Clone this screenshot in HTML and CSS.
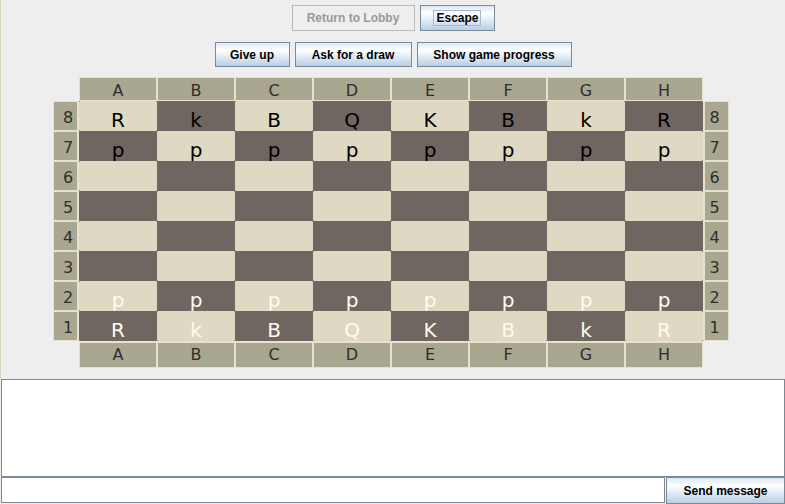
FILE: index.html
```html
<!DOCTYPE html>
<html>
<head>
<meta charset="utf-8">
<link rel="stylesheet" href="styles.css">
</head>
<body>
<div class="top">
  <div class="bar bar1">
    <button class="btn disabled w-lobby" disabled>Return to Lobby</button>
    <button class="btn w-escape"><span class="focus">Escape</span></button>
  </div>
  <div class="bar bar2">
    <button class="btn w-giveup">Give up</button>
    <button class="btn w-draw">Ask for a draw</button>
    <button class="btn w-progress">Show game progress</button>
  </div>
  <div class="board">
    <div class="corner"></div>
    <div class="hd">A</div><div class="hd">B</div><div class="hd">C</div><div class="hd">D</div><div class="hd">E</div><div class="hd">F</div><div class="hd">G</div><div class="hd">H</div>
    <div class="corner"></div>

    <div class="rk rk-l">8</div>
    <div class="sq l b">R</div><div class="sq d b">k</div><div class="sq l b">B</div><div class="sq d b">Q</div><div class="sq l b">K</div><div class="sq d b">B</div><div class="sq l b">k</div><div class="sq d b">R</div>
    <div class="rk rk-r">8</div>

    <div class="rk rk-l">7</div>
    <div class="sq d b">p</div><div class="sq l b">p</div><div class="sq d b">p</div><div class="sq l b">p</div><div class="sq d b">p</div><div class="sq l b">p</div><div class="sq d b">p</div><div class="sq l b">p</div>
    <div class="rk rk-r">7</div>

    <div class="rk rk-l">6</div>
    <div class="sq l"></div><div class="sq d"></div><div class="sq l"></div><div class="sq d"></div><div class="sq l"></div><div class="sq d"></div><div class="sq l"></div><div class="sq d"></div>
    <div class="rk rk-r">6</div>

    <div class="rk rk-l">5</div>
    <div class="sq d"></div><div class="sq l"></div><div class="sq d"></div><div class="sq l"></div><div class="sq d"></div><div class="sq l"></div><div class="sq d"></div><div class="sq l"></div>
    <div class="rk rk-r">5</div>

    <div class="rk rk-l">4</div>
    <div class="sq l"></div><div class="sq d"></div><div class="sq l"></div><div class="sq d"></div><div class="sq l"></div><div class="sq d"></div><div class="sq l"></div><div class="sq d"></div>
    <div class="rk rk-r">4</div>

    <div class="rk rk-l">3</div>
    <div class="sq d"></div><div class="sq l"></div><div class="sq d"></div><div class="sq l"></div><div class="sq d"></div><div class="sq l"></div><div class="sq d"></div><div class="sq l"></div>
    <div class="rk rk-r">3</div>

    <div class="rk rk-l">2</div>
    <div class="sq l w">p</div><div class="sq d w">p</div><div class="sq l w">p</div><div class="sq d w">p</div><div class="sq l w">p</div><div class="sq d w">p</div><div class="sq l w">p</div><div class="sq d w">p</div>
    <div class="rk rk-r">2</div>

    <div class="rk rk-l">1</div>
    <div class="sq d w">R</div><div class="sq l w">k</div><div class="sq d w">B</div><div class="sq l w">Q</div><div class="sq d w">K</div><div class="sq l w">B</div><div class="sq d w">k</div><div class="sq l w">R</div>
    <div class="rk rk-r">1</div>

    <div class="corner"></div>
    <div class="hd hd-b">A</div><div class="hd hd-b">B</div><div class="hd hd-b">C</div><div class="hd hd-b">D</div><div class="hd hd-b">E</div><div class="hd hd-b">F</div><div class="hd hd-b">G</div><div class="hd hd-b">H</div>
    <div class="corner"></div>
  </div>
</div>
<div class="chat"></div>
<div class="sendrow">
  <div class="input"></div>
  <button class="btn send">Send message</button>
</div>
</body>
</html>
```
FILE: styles.css
```css
html, body {
  margin: 0;
  padding: 0;
}
body {
  background: #eeeeee;
  width: 785px;
  height: 504px;
  overflow: hidden;
  font-family: "Liberation Sans", Arial, sans-serif;
}
.top {
  border-left: 1px solid #d9d3c0;
  padding-top: 5px;
  padding-bottom: 11px;
}
.bar {
  display: flex;
  justify-content: center;
  gap: 5px;
}
.bar1 { height: 26px; }
.bar2 { height: 25px; margin-top: 11px; }
.btn {
  box-sizing: border-box;
  height: 100%;
  margin: 0;
  padding: 0;
  border: 1px solid #7a8a99;
  border-radius: 0;
  background: linear-gradient(to bottom, #dde8f3 0%, #ffffff 30%, #e6eef7 55%, #b8cfe5 100%);
  font-family: "Liberation Sans", Arial, sans-serif;
  font-weight: bold;
  font-size: 12px;
  color: #000;
  text-align: center;
  display: flex;
  align-items: center;
  justify-content: center;
}
.btn.disabled {
  background: #eeeeee;
  border-color: #b8b8b8;
  color: #999999;
}
.focus {
  border: 1px solid #a3b8cc;
  padding: 1px 1px 1px 2px;
  line-height: 12px;
}
.w-lobby { width: 123px; }
.w-escape { width: 75px; }
.w-giveup { width: 75px; }
.w-draw { width: 117px; }
.w-progress { width: 155px; }

.board {
  display: grid;
  grid-template-columns: 26px repeat(8, 78px) 26px;
  grid-template-rows: 24px repeat(8, 30px) 27px;
  margin-top: 10px;
  margin-left: 52px;
  width: 676px;
}
.hd {
  box-sizing: border-box;
  background: #a9a78f;
  border: 1px solid #e6e2cf;
  color: #2e2e2e;
  font-family: "DejaVu Sans", sans-serif;
  font-size: 16px;
  line-height: 19px;
  padding-top: 3px;
  text-align: center;
}
.hd-b {
  border-top-width: 2px;
  padding-top: 0;
  line-height: 24px;
}
.rk {
  box-sizing: border-box;
  background: #a9a78f;
  border: 1px solid #e6e2cf;
  color: #2e2e2e;
  font-family: "DejaVu Sans", sans-serif;
  font-size: 16px;
  line-height: 25px;
  padding-top: 3px;
  text-align: center;
}
.rk-l {
  border-right-width: 2px;
  padding-left: 5px;
}
.rk-r {
  border-left-width: 2px;
  padding-right: 4px;
}
.sq {
  --dot: linear-gradient(#8c8782, #8c8782);
  box-sizing: border-box;
  font-family: "DejaVu Sans", sans-serif;
  font-size: 20px;
  line-height: 30px;
  height: 30px;
  padding-top: 4px;
  text-align: center;
  overflow: visible;
  background-image: var(--dot), var(--dot), var(--dot), var(--dot);
  background-size: 1px 1px;
  background-repeat: no-repeat;
  background-position: left top, right top, left bottom, right bottom;
}
.sq.l { background-color: #dfd9c3; }
.sq.d { background-color: #6f6661; }
.sq.b { color: #000000; }
.sq.w { color: #fffbea; }

.chat {
  box-sizing: border-box;
  margin-left: 1px;
  width: 784px;
  height: 98px;
  background: #ffffff;
  border: 1px solid #7a8a99;
}
.sendrow {
  display: flex;
  margin-left: 1px;
  height: 27px;
}
.input {
  box-sizing: border-box;
  flex: 1;
  height: 26px;
  background: #ffffff;
  border: 1px solid #7a8a99;
}
.btn.send {
  width: 119px;
  height: 27px;
  margin-left: 1px;
}
```
